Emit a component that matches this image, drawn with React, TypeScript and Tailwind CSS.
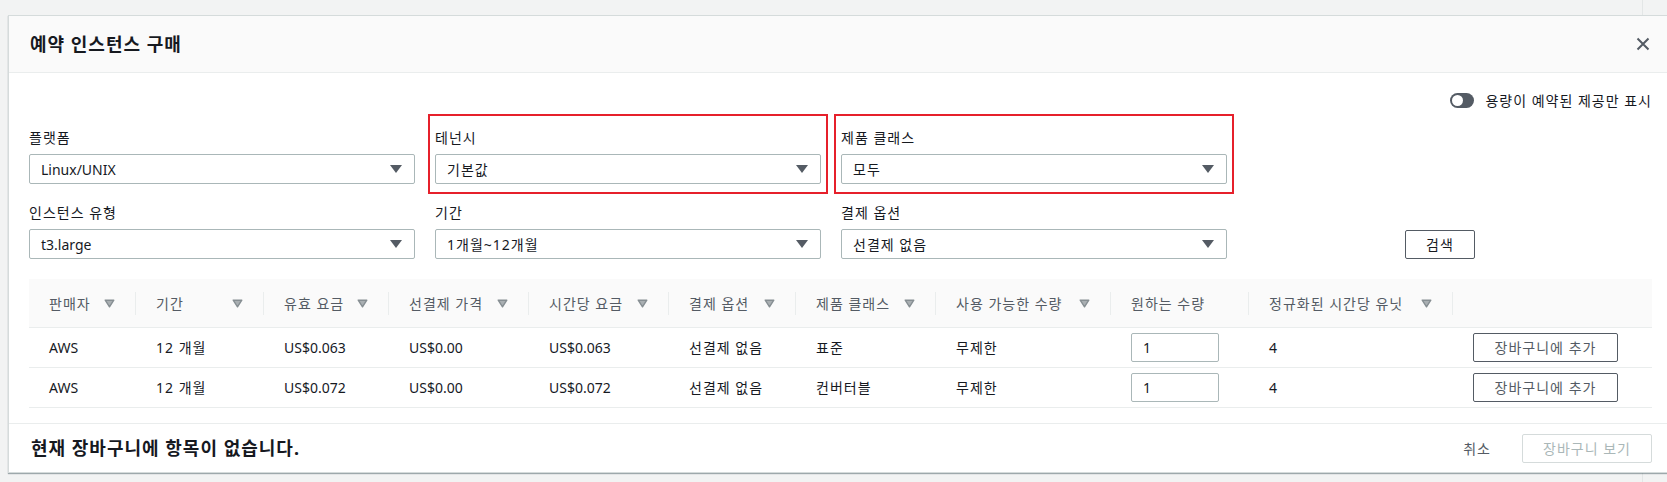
const font = "font-['Noto_Sans','Noto_Sans_CJK_KR',sans-serif]";

// korean glyphs run a bit wider in the reference
const ko = (s: string) => (/[가-힣]/.test(s) ? "tracking-[1px]" : "");

function Caret() {
  return (
    <svg width="12" height="8" viewBox="0 0 12 8">
      <path d="M0 0h12L6 8z" fill="#545b64" />
    </svg>
  );
}

function FilterIcon() {
  return (
    <svg width="11" height="9" viewBox="0 0 11 9">
      <path d="M1.2 1.2h8.6L5.5 7.8z" fill="#a9afb2" stroke="#868e92" strokeWidth="1.4" strokeLinejoin="round" />
    </svg>
  );
}

function Field({ label, value, marked }: { label: string; value: string; marked?: boolean }) {
  return (
    <div className="relative flex flex-col">
      {marked && (
        <div className="pointer-events-none absolute -left-[7px] -right-[7px] -top-[14px] -bottom-[10px] border-2 border-[#e6202b]" />
      )}
      <div className="mb-[6px] h-[20px] text-[14px] leading-[20px] tracking-[1px] text-[#16191f]">{label}</div>
      <div className="flex h-[30px] items-center justify-between rounded-[2px] border border-[#aab7b8] bg-white pl-[11px] pr-[12px] text-[14px] text-[#16191f]">
        <span className={ko(value)}>{value}</span>
        <Caret />
      </div>
    </div>
  );
}

const columns = [
  { title: "판매자", filter: true },
  { title: "기간", filter: true },
  { title: "유효 요금", filter: true },
  { title: "선결제 가격", filter: true },
  { title: "시간당 요금", filter: true },
  { title: "결제 옵션", filter: true },
  { title: "제품 클래스", filter: true },
  { title: "사용 가능한 수량", filter: true },
  { title: "원하는 수량", filter: false },
  { title: "정규화된 시간당 유닛", filter: true },
];

const rows = [
  ["AWS", "12 개월", "US$0.063", "US$0.00", "US$0.063", "선결제 없음", "표준", "무제한"],
  ["AWS", "12 개월", "US$0.072", "US$0.00", "US$0.072", "선결제 없음", "컨버터블", "무제한"],
];

const gridCols = "grid grid-cols-[107px_128px_125px_140px_140px_127px_140px_175px_138px_204px_1fr]";

export default function App() {
  return (
    <div
      className={`${font} h-[482px] w-full overflow-hidden bg-[#f2f3f3] bg-[linear-gradient(to_right,#f2f3f3_1642px,#e3e6e6_1642px,#e3e6e6_1643px,#f2f3f3_1643px)] pl-[8px] pt-[15px]`}
    >
      <div className="w-[1665px] border border-[#d5dbdb] bg-white shadow-[0_1px_1px_rgba(0,28,36,0.35)]">
        <div className="flex h-[57px] items-center justify-between border-b border-[#eaeded] bg-[#fafafa] pl-[21px] pr-[22px]">
          <h2 className="text-[18px] font-bold tracking-[1px] text-[#16191f]">예약 인스턴스 구매</h2>
          <svg width="14" height="14" viewBox="0 0 14 14">
            <path d="M1.5 1.5l11 11M12.5 1.5l-11 11" stroke="#545b64" strokeWidth="2" />
          </svg>
        </div>

        <div className="px-[20px] pb-[15px] pt-[17px]">
          <div className="flex h-[20px] items-center justify-end gap-[11px]">
            <div className="flex h-[15px] w-[24px] items-center rounded-full bg-[#545b64] px-[2px]">
              <div className="h-[11px] w-[11px] rounded-full bg-white" />
            </div>
            <span className="text-[14px] tracking-[1px] text-[#16191f]">용량이 예약된 제공만 표시</span>
          </div>

          <div className="mt-[18px] grid grid-cols-[repeat(4,386px)] gap-x-[20px] gap-y-[19px]">
            <Field label="플랫폼" value="Linux/UNIX" />
            <Field label="테넌시" value="기본값" marked />
            <Field label="제품 클래스" value="모두" marked />
            <div />
            <Field label="인스턴스 유형" value="t3.large" />
            <Field label="기간" value="1개월~12개월" />
            <Field label="결제 옵션" value="선결제 없음" />
            <div className="flex items-end justify-center">
              <button className="h-[29px] w-[70px] rounded-[2px] border border-[#545b64] bg-white text-[14px] tracking-[1px] text-[#16191f]">
                검색
              </button>
            </div>
          </div>

          <div className="mt-[20px]">
            <div className={`${gridCols} h-[49px] border-b border-[#eaeded] bg-[#fafafa]`}>
              {columns.map((c) => (
                <div key={c.title} className="flex items-center pl-[20px] text-[14px] text-[#545b64]">
                  <span className="tracking-[1px]">{c.title}</span>
                  <div className="ml-auto flex items-center">
                    {c.filter && (
                      <span className="mr-[20px] flex">
                        <FilterIcon />
                      </span>
                    )}
                    <span className="h-[23px] w-px bg-[#eaeded]" />
                  </div>
                </div>
              ))}
              <div />
            </div>
            {rows.map((r, i) => (
              <div key={i} className={`${gridCols} h-[40px] border-b border-[#eaeded] text-[14px] text-[#16191f]`}>
                {r.map((v, j) => (
                  <div key={j} className={`flex items-center pl-[20px] ${ko(v)}`}>
                    {v}
                  </div>
                ))}
                <div className="flex items-center pl-[20px]">
                  <div className="flex h-[29px] w-[88px] items-center rounded-[2px] border border-[#aab7b8] pl-[11px]">1</div>
                </div>
                <div className="flex items-center pl-[20px]">4</div>
                <div className="flex items-center pl-[20px]">
                  <button className="h-[29px] w-[145px] rounded-[2px] border border-[#545b64] bg-white text-[14px] tracking-[1px] text-[#545b64]">
                    장바구니에 추가
                  </button>
                </div>
              </div>
            ))}
          </div>
        </div>

        <div className="flex h-[49px] items-center justify-between border-t border-[#eaeded] pl-[22px] pr-[20px]">
          <span className="text-[18px] font-bold tracking-[1px] text-[#16191f]">현재 장바구니에 항목이 없습니다.</span>
          <div className="flex items-center">
            <span className="mr-[31px] text-[14px] tracking-[1px] text-[#545b64]">취소</span>
            <button className="h-[29px] w-[130px] rounded-[2px] border border-[#d5dbdb] bg-white text-[14px] tracking-[1px] text-[#aab7b8]">
              장바구니 보기
            </button>
          </div>
        </div>
      </div>
    </div>
  );
}
